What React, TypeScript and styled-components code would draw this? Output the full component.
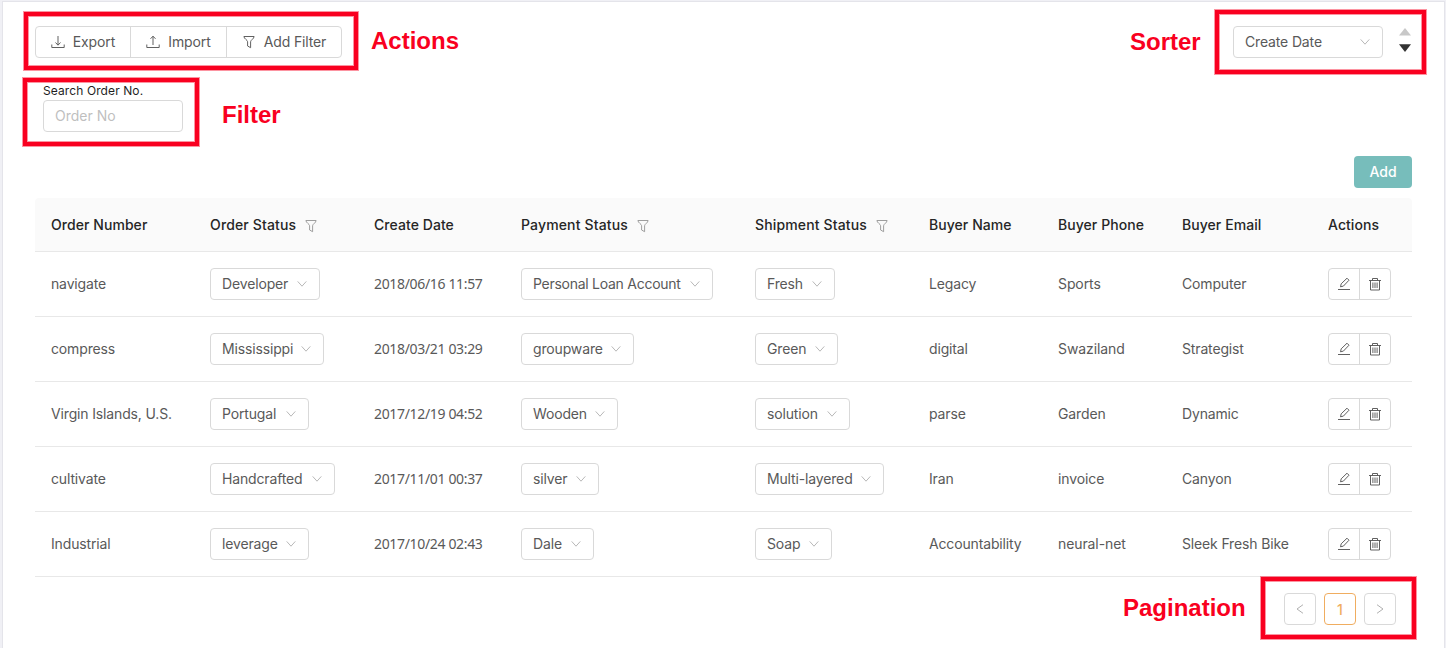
import React from "react";
import styled, { createGlobalStyle, css } from "styled-components";

const Global = createGlobalStyle`
  * { box-sizing: border-box; }
  body { margin: 0; background: #f0f0f5; font-family: Inter, "Liberation Sans", sans-serif; font-size: 14px; color: #595959; }
`;

const Page = styled.div`
  position: relative;
  height: 648px;
  padding: 1px 1px 0 2px;
  overflow: hidden;
`;

const Card = styled.main`
  height: 660px;
  padding: 24px 32px 0;
  background: #fff;
  border: 1px solid #e4e4ea;
`;

const Bar = styled.div`
  display: flex;
  justify-content: space-between;
  height: 32px;
`;

const ButtonGroup = styled.div`
  display: flex;
  height: 32px;
  width: max-content;
  border: 1px solid #d9d9d9;
  border-radius: 4px;
  background: #fff;
`;

const GroupButton = styled.button<{ $width: number }>`
  display: flex;
  align-items: center;
  justify-content: center;
  gap: 8px;
  width: ${(p) => p.$width}px;
  padding: 0;
  border: 0;
  background: none;
  color: #595959;
  font: inherit;
  & + & { border-left: 1px solid #d9d9d9; }
`;

const Text = styled.span<{ $ls?: number }>`
  padding-bottom: 2px;
  letter-spacing: ${(p) => p.$ls ?? -0.15}px;
  white-space: nowrap;
`;

const HeadText = styled.span<{ $ls: number }>`
  letter-spacing: ${(p) => p.$ls}px;
`;

const SortControl = styled.div`
  display: flex;
  align-items: center;
  gap: 16px;
  padding-right: 1px;
`;

const SortArrows = styled.svg`
  margin-bottom: 4px;
`;

const SelectBox = styled.div<{ $width: number }>`
  display: flex;
  align-items: center;
  justify-content: space-between;
  width: ${(p) => p.$width}px;
  height: 32px;
  padding: 0 12px 0 11px;
  border: 1px solid #d9d9d9;
  border-radius: 4px;
  background: #fff;
  white-space: nowrap;
`;

const FilterField = styled.label`
  display: block;
  width: 140px;
  margin: 25px 0 0 8px;
  font-size: 12px;
  line-height: 16px;
  letter-spacing: 0.1px;
  color: #1f1f1f;
`;

const Input = styled.input`
  display: block;
  width: 140px;
  height: 32px;
  margin-top: 1px;
  padding: 0 11px 2px;
  border: 1px solid #d9d9d9;
  border-radius: 4px;
  font: 14px Inter, sans-serif;
  outline: none;
  &::placeholder { color: #bfbfbf; }
`;

const AddRow = styled.div`
  display: flex;
  justify-content: flex-end;
  margin: 24px 0 10px;
`;

const AddButton = styled.button`
  width: 58px;
  height: 32px;
  padding: 0 0 2px;
  border: 0;
  border-radius: 4px;
  background: #77bdbb;
  color: #fff;
  font: 500 14px Inter, sans-serif;
`;

const columns = css`
  display: grid;
  grid-template-columns: 159px 164px 147px 234px 174px 129px 124px 146px 100px;
  align-items: center;
`;

const HeadRow = styled.div`
  ${columns}
  height: 54px;
  background: #fafafa;
  border-bottom: 1px solid #e8e8e8;
  border-radius: 4px 4px 0 0;
  color: #262626;
  font-weight: 500;
`;

const Row = styled.div`
  ${columns}
  height: 65px;
  border-bottom: 1px solid #e8e8e8;
`;

const Cell = styled.div`
  display: flex;
  align-items: center;
  gap: 8px;
  padding-left: 16px;
  white-space: nowrap;
`;

const HeadFilter = styled.span`
  display: flex;
  padding-top: 2px;
  color: #999;
`;

const DateText = styled.span`
  padding-bottom: 2px;
  font-family: "Noto Sans", sans-serif;
  font-size: 14px;
  letter-spacing: -0.34px;
`;

const Pager = styled.nav`
  display: flex;
  justify-content: flex-end;
  gap: 8px;
  padding: 16px 16px 0 0;
`;

const PageButton = styled.button<{ $active?: boolean }>`
  display: grid;
  place-items: center;
  width: 32px;
  height: 32px;
  padding: 0;
  border: 1px solid ${(p) => (p.$active ? "#f0ad60" : "#d9d9d9")};
  border-radius: 4px;
  background: #fff;
  color: ${(p) => (p.$active ? "#f0ad60" : "#b0b0b0")};
  font: 500 14px Inter, sans-serif;
`;

const Marker = styled.div<{ $x: number; $y: number; $w: number; $h: number }>`
  position: absolute;
  left: ${(p) => p.$x}px;
  top: ${(p) => p.$y}px;
  width: ${(p) => p.$w}px;
  height: ${(p) => p.$h}px;
  border: 4px solid #f90020;
  box-shadow: 0 0 0 1px rgba(249, 0, 32, 0.42), inset 0 0 0 1px rgba(249, 0, 32, 0.42);
  pointer-events: none;
`;

const MarkerLabel = styled.span<{ $x: number; $y: number; $ls?: number }>`
  position: absolute;
  left: ${(p) => p.$x}px;
  top: ${(p) => p.$y}px;
  color: #f90020;
  font: 700 24px/28px "Liberation Sans", Arial, sans-serif;
  letter-spacing: ${(p) => p.$ls ?? 0}px;
  white-space: nowrap;
`;

const Svg = ({ children }: { children: React.ReactNode }) => (
  <svg width="14" height="14" viewBox="0 0 14 14" fill="none" stroke="currentColor" strokeWidth="0.95">
    {children}
  </svg>
);
const ExportIcon = () => <Svg><path d="M.8 9.5v3h12.4v-3M7 1v9M4.5 7.5 7 10.2l2.5-2.7" /></Svg>;
const ImportIcon = () => <Svg><path d="M.8 9.5v3h12.4v-3M7 10V1.2M4.5 3.8 7 1.2l2.5 2.6" /></Svg>;
const FunnelIcon = () => <Svg><path d="M1.9 1.5h10.2c0 2.2-3.5 3.6-3.5 5.2v6L5.6 11V6.7c0-1.6-3.7-3-3.7-5.2z" /></Svg>;
const EditIcon = () => <Svg><path d="M1 12.5h12M3.5 9.8l.7-3L10 1.2l2 2-5.6 5.9z" /></Svg>;
const TrashIcon = () => <Svg><path d="M1 3.5h12M4.5 3.5v-2h5v2M2.5 3.5v9.5h9V3.5M4.9 5.5V11M7 5.5V11M9.1 5.5V11" /></Svg>;
const Chevron = () => (
  <svg width="10" height="6" viewBox="0 0 10 6" fill="none" stroke="#b8b8b8"><path d="M.7.4 5 5.2 9.3.4" /></svg>
);

const headers: { label: string; filter?: boolean }[] = [
  { label: "Order Number" },
  { label: "Order Status", filter: true },
  { label: "Create Date" },
  { label: "Payment Status", filter: true },
  { label: "Shipment Status", filter: true },
  { label: "Buyer Name" },
  { label: "Buyer Phone" },
  { label: "Buyer Email" },
  { label: "Actions" },
];

type Choice = [label: string, width: number, tracking?: number];
const orders: { no: string; status: Choice; date: string; payment: Choice; shipment: Choice; name: string; phone: string; email: string }[] = [
  { no: "navigate", status: ["Developer", 110], date: "2018/06/16 11:57", payment: ["Personal Loan Account", 192, -0.27], shipment: ["Fresh", 80], name: "Legacy", phone: "Sports", email: "Computer" },
  { no: "compress", status: ["Mississippi", 114], date: "2018/03/21 03:29", payment: ["groupware", 113], shipment: ["Green", 83], name: "digital", phone: "Swaziland", email: "Strategist" },
  { no: "Virgin Islands, U.S.", status: ["Portugal", 99], date: "2017/12/19 04:52", payment: ["Wooden", 97], shipment: ["solution", 95], name: "parse", phone: "Garden", email: "Dynamic" },
  { no: "cultivate", status: ["Handcrafted", 125], date: "2017/11/01 00:37", payment: ["silver", 78], shipment: ["Multi-layered", 129], name: "Iran", phone: "invoice", email: "Canyon" },
  { no: "Industrial", status: ["leverage", 99], date: "2017/10/24 02:43", payment: ["Dale", 73], shipment: ["Soap", 77], name: "Accountability", phone: "neural-net", email: "Sleek Fresh Bike" },
];

const Select = ({ value }: { value: Choice }) => (
  <SelectBox $width={value[1]}><Text $ls={value[2]}>{value[0]}</Text><Chevron /></SelectBox>
);

export default function App() {
  return (
    <Page>
      <Global />
      <Card>
        <Bar>
          <ButtonGroup>
            <GroupButton $width={94}><ExportIcon /><Text $ls={-0.1}>Export</Text></GroupButton>
            <GroupButton $width={96}><ImportIcon /><Text $ls={-0.1}>Import</Text></GroupButton>
            <GroupButton $width={115}><FunnelIcon /><Text>Add Filter</Text></GroupButton>
          </ButtonGroup>
          <SortControl>
            <SelectBox $width={150}><Text>Create Date</Text><Chevron /></SelectBox>
            <SortArrows width="12" height="24" viewBox="0 0 12 24">
              <path d="M6 0l6 7.5H0z" fill="#c8c8c8" />
              <path d="M6 24l6-7.8H0z" fill="#333" />
            </SortArrows>
          </SortControl>
        </Bar>
        <FilterField>
          Search Order No.
          <Input placeholder="Order No" />
        </FilterField>
        <AddRow><AddButton>Add</AddButton></AddRow>
        <HeadRow>
          {headers.map((h) => (
            <Cell key={h.label}>
              <HeadText $ls={h.filter ? 0.15 : 0.06}>{h.label}</HeadText>
              {h.filter && <HeadFilter><FunnelIcon /></HeadFilter>}
            </Cell>
          ))}
        </HeadRow>
        {orders.map((o) => (
          <Row key={o.no}>
            <Cell><Text>{o.no}</Text></Cell>
            <Cell><Select value={o.status} /></Cell>
            <Cell><DateText>{o.date}</DateText></Cell>
            <Cell><Select value={o.payment} /></Cell>
            <Cell><Select value={o.shipment} /></Cell>
            <Cell><Text>{o.name}</Text></Cell>
            <Cell><Text $ls={-0.1}>{o.phone}</Text></Cell>
            <Cell><Text>{o.email}</Text></Cell>
            <Cell>
              <ButtonGroup>
                <GroupButton $width={30}><EditIcon /></GroupButton>
                <GroupButton $width={31}><TrashIcon /></GroupButton>
              </ButtonGroup>
            </Cell>
          </Row>
        ))}
        <Pager>
          <PageButton><svg width="8" height="10" viewBox="0 0 8 10" fill="none" stroke="currentColor"><path d="M7 .7 1 5l6 4.3" /></svg></PageButton>
          <PageButton $active>1</PageButton>
          <PageButton><svg width="8" height="10" viewBox="0 0 8 10" fill="none" stroke="currentColor"><path d="M1 .7 7 5 1 9.3" /></svg></PageButton>
        </Pager>
      </Card>
      <Marker $x={24} $y={12} $w={334} $h={58} />
      <Marker $x={23} $y={78} $w={176} $h={68} />
      <Marker $x={1215} $y={10} $w={211} $h={64} />
      <Marker $x={1261} $y={577} $w={155} $h={62} />
      <MarkerLabel $x={371} $y={27}>Actions</MarkerLabel>
      <MarkerLabel $x={222} $y={101}>Filter</MarkerLabel>
      <MarkerLabel $x={1130} $y={28}>Sorter</MarkerLabel>
      <MarkerLabel $x={1123} $y={594}>Pagination</MarkerLabel>
    </Page>
  );
}
